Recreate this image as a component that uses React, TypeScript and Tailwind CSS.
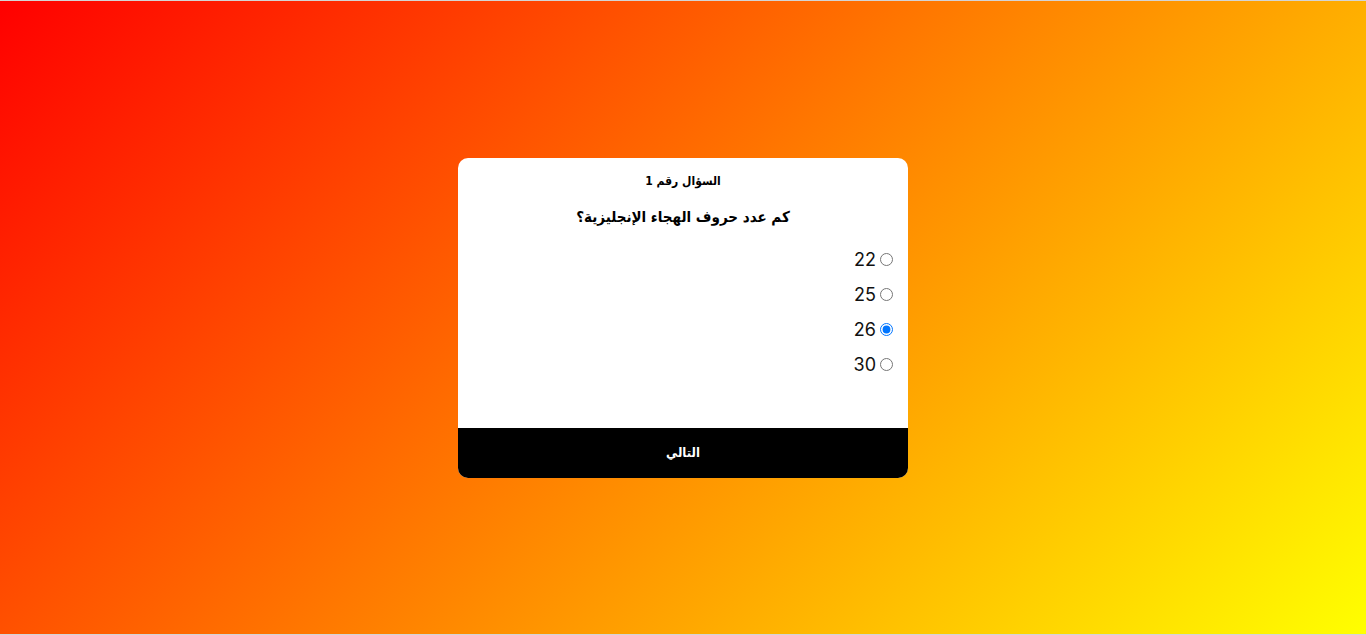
import { useState } from "react";

const options = ["22", "25", "26", "30"];

export default function App() {
  const [answer, setAnswer] = useState("26");

  return (
    <div className="h-[635px] w-full border-y border-[#d4d4d4] bg-[linear-gradient(135deg,#ff0000,#ffff00)] flex items-center justify-center">
      <div
        dir="rtl"
        className="w-[450px] h-[320px] bg-white rounded-[10px] overflow-hidden flex flex-col font-['DejaVu_Sans_Condensed','DejaVu_Sans',sans-serif]"
      >
        <div className="flex-1 px-[15px] pt-[13px]">
          <h3 className="text-center text-[12px] font-bold text-black leading-[20px]">السؤال رقم 1</h3>
          <h2 className="text-center text-[15px] font-bold text-black mt-[15px] leading-[22px]">
            كم عدد حروف الهجاء الإنجليزية؟
          </h2>
          <div className="mt-[22px] flex flex-col gap-[15px]">
            {options.map((opt) => (
              <label key={opt} className="flex items-center gap-[4px] h-[20px] cursor-pointer">
                <input
                  type="radio"
                  name="q1"
                  value={opt}
                  checked={answer === opt}
                  onChange={() => setAnswer(opt)}
                  className="w-[13px] h-[13px]"
                />
                <span className="text-[18px] text-[#111] font-['Inter',sans-serif]">{opt}</span>
              </label>
            ))}
          </div>
        </div>
        <button className="h-[50px] w-full bg-black text-white text-[13px] font-bold">التالي</button>
      </div>
    </div>
  );
}
